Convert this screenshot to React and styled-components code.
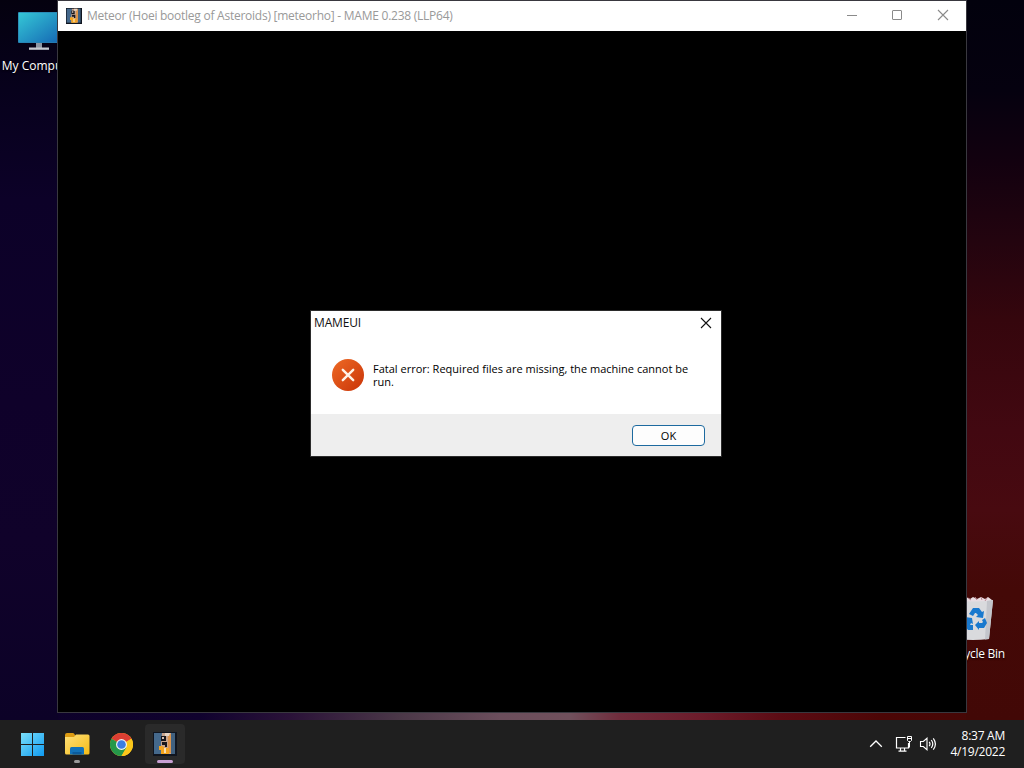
import styled, { createGlobalStyle } from 'styled-components';

const GlobalStyle = createGlobalStyle`
  * {
    box-sizing: border-box;
  }
  body {
    margin: 0;
    overflow: hidden;
    font-family: 'Open Sans', 'Noto Sans', sans-serif;
  }
`;

const ScreenStyled = styled.div`
  position: relative;
  display: flex;
  flex-direction: column;
  width: 1024px;
  height: 768px;
  overflow: hidden;
  background: #0b0220;
`;

const DesktopStyled = styled.div`
  position: relative;
  display: flex;
  justify-content: space-between;
  flex: 1;
  background: linear-gradient(
    90deg,
    #0c0128 0,
    #10022e 200px,
    #2a1238 290px,
    #4b3848 400px,
    #6b4e5c 500px,
    #70505c 570px,
    #702c3c 620px,
    #6c1c2b 700px,
    #5c0c14 780px,
    #4c0606 880px,
    #420806 1024px
  );
`;

const LeftWallpaperStyled = styled.div`
  width: 58px;
  background: linear-gradient(
    180deg,
    #04010f 0,
    #07011c 90px,
    #0c0128 200px,
    #0f012a 400px,
    #10022a 540px,
    #0c0227 720px
  );
`;

const RightWallpaperStyled = styled.div`
  width: 58px;
  background: linear-gradient(
    180deg,
    #02010d 0,
    #05010f 90px,
    #12010f 160px,
    #23040f 240px,
    #35060d 320px,
    #420811 430px,
    #480a10 510px,
    #440907 590px,
    #420806 720px
  );
`;

const ShortcutStyled = styled.div`
  position: absolute;
  left: ${({ $left }) => $left}px;
  top: ${({ $top }) => $top}px;
  width: 76px;
  display: flex;
  flex-direction: column;
  align-items: center;
  gap: ${({ $gap }) => $gap}px;
`;

const ShortcutLabelStyled = styled.span`
  padding-left: 2px;
  font-size: 12px;
  line-height: 16px;
  letter-spacing: ${({ $spacing }) => $spacing || 0}px;
  white-space: nowrap;
  color: #fff;
  text-shadow: 0 1px 2px #000;
`;

const WindowStyled = styled.div`
  position: absolute;
  left: 57px;
  top: 0;
  width: 910px;
  height: 713px;
  display: flex;
  flex-direction: column;
  border: 1px solid #39383f;
  background: #000;
`;

const TitleBarStyled = styled.div`
  display: flex;
  align-items: center;
  height: 30px;
  padding-left: 8px;
  background: #fff;
`;

const TitleStyled = styled.span`
  margin-left: 5px;
  font-size: 12px;
  line-height: 16px;
  letter-spacing: -0.25px;
  color: #999;
`;

const CaptionButtonsStyled = styled.div`
  display: flex;
  margin-left: auto;
`;

const CaptionButtonStyled = styled.div`
  display: flex;
  align-items: center;
  justify-content: center;
  width: ${({ $width }) => $width || 46}px;
  height: 30px;
  padding-bottom: 2px;
  color: #8a8a8a;
`;

const DialogStyled = styled.div`
  position: absolute;
  left: 310px;
  top: 310px;
  width: 412px;
  height: 147px;
  display: flex;
  flex-direction: column;
  border: 1px solid #2b2b2b;
  background: #fff;
`;

const DialogHeaderStyled = styled.div`
  display: flex;
  align-items: center;
  justify-content: space-between;
  height: 24px;
  padding: 0 9px 0 3px;
  font-size: 12px;
  letter-spacing: -0.15px;
  color: #111;
`;

const DialogTitleStyled = styled.span`
  padding-bottom: 2px;
`;

const DialogBodyStyled = styled.div`
  display: flex;
  flex: 1;
  padding: 24px 0 0 21px;
`;

const MessageStyled = styled.div`
  margin: 3px 0 0 9px;
  font-size: 11px;
  line-height: 13px;
  white-space: nowrap;
  letter-spacing: 0.01px;
  color: #000;
`;

const DialogFooterStyled = styled.div`
  display: flex;
  align-items: flex-start;
  justify-content: flex-end;
  height: 42px;
  padding: 11px 16px 0 0;
  background: #eee;
`;

const OkButtonStyled = styled.button`
  width: 73px;
  height: 21px;
  padding: 0;
  border: 1px solid #1d6a9f;
  border-radius: 4px;
  background: #fdfdfd;
  font-family: inherit;
  font-size: 11px;
  line-height: 19px;
  color: #000;
`;

const TaskbarStyled = styled.div`
  display: flex;
  align-items: center;
  height: 48px;
  padding: 0 19px 0 12px;
  background: #1f1f1f;
`;

const TaskButtonStyled = styled.div`
  position: relative;
  display: flex;
  align-items: center;
  justify-content: center;
  width: 40px;
  height: 40px;
  margin-right: ${({ $gap }) => $gap || 4}px;
  border-radius: 4px;
  background: ${({ $active }) => ($active ? '#2a2a2a' : 'transparent')};
`;

const IndicatorStyled = styled.div`
  position: absolute;
  left: 50%;
  bottom: 1px;
  width: ${({ $active }) => ($active ? 16 : 6)}px;
  height: 3px;
  border-radius: 2px;
  transform: translateX(-50%);
  background: ${({ $active }) => ($active ? '#c9a0d4' : '#9a9a9a')};
`;

const TrayStyled = styled.div`
  display: flex;
  align-items: center;
  margin-left: auto;
  color: #fff;
`;

const TrayItemStyled = styled.div`
  display: flex;
  margin-right: ${({ $gap }) => $gap}px;
`;

const ClockStyled = styled.div`
  width: 67px;
  font-size: 12px;
  line-height: 16px;
  letter-spacing: -0.25px;
  text-align: right;
  white-space: nowrap;
`;

const MonitorIcon = () => (
  <svg width='42' height='39' viewBox='0 0 42 39'>
    <defs>
      <linearGradient id='screen' x1='0' y1='0' x2='1' y2='1'>
        <stop offset='0' stopColor='#35c8d6' />
        <stop offset='1' stopColor='#1568b4' />
      </linearGradient>
    </defs>
    <path d='M18 31h6v5h-6z' fill='#8d96a3' />
    <path d='M11 35.500h20v2.300H11z' fill='#c5c9d0' />
    <rect x='0' y='0' width='42' height='31' rx='1' fill='#2a7fae' />
    <rect x='0.700' y='0.700' width='40.600' height='29.600' fill='url(#screen)' />
  </svg>
);

const RecycleBinIcon = () => (
  <svg width='44' height='46' viewBox='0 0 44 46'>
    <path
      d='M2 4l4-3 4 2 4-2 4 2 3-2 4 2 4-2 4 2 3-2 4 3-1 4H3z'
      fill='#e9dde2'
    />
    <path d='M16 2l3 2M23 1l2 3M29 1l1 3M35 2l-2 3' stroke='#b98793' strokeWidth='1' />
    <path d='M1 4q20 3 40 0l-4 39q-16 2-32 0z' fill='#d9dadd' />
    <path d='M35 5l6-1-4 39-4 .5z' fill='#c3c5cb' />
    <g fill='#1979ce'>
      <path d='M17 18l4-6h6l3 4 2-1-1 7-7-1 2-2-2-2h-1l-2 3z' />
      <path d='M30 24l3-2 2 5-3 5h-5v2l-4-5 4-4v2h3l1-1z' />
      <path d='M13 21l7 1 1 6-2-1-1 2h3v5h-5l-4-5 2-5z' />
    </g>
  </svg>
);

const MameIcon = ({ size }) => (
  <svg width={size} height={size} viewBox='0 0 24 24'>
    <rect width='24' height='24' fill='#10151f' />
    <path d='M1 1h8v21H1z' fill='#45698c' />
    <path d='M18 1h4v21h-4z' fill='#41617f' />
    <path d='M9 1h9v21H8V12z' fill='#c8a58d' />
    <path d='M15 2h3v19h-3z' fill='#dc944c' />
    <path d='M8 4h5v5H8z' fill='#17161b' />
    <path d='M9 5h2v2H9z' fill='#d8c2b4' />
    <path d='M12 1h5l-1 3h-4z' fill='#e6d4c4' />
    <path d='M6 14h3l3 2h4v6H8v-4H6z' fill='#f5a51e' />
    <path d='M9 10h5v5h-2v-2H9z' fill='#17161b' />
    <path d='M11 16h2v5h-2z' fill='#f8ddb0' />
  </svg>
);

const ErrorIcon = () => (
  <svg width='32' height='32' viewBox='0 0 32 32'>
    <defs>
      <linearGradient id='error' x1='0' y1='0' x2='1' y2='1'>
        <stop offset='0' stopColor='#ee6a25' />
        <stop offset='1' stopColor='#c93408' />
      </linearGradient>
    </defs>
    <circle cx='16' cy='16' r='16' fill='url(#error)' />
    <path
      d='M10.800 10.800l10.400 10.400M21.200 10.800L10.800 21.200'
      stroke='#fff3e8'
      strokeWidth='2.400'
      strokeLinecap='round'
    />
  </svg>
);

const CloseIcon = ({ size }) => (
  <svg width={size} height={size} viewBox='0 0 12 12' fill='none' stroke='currentColor'>
    <path d='M1 1l10 10M11 1L1 11' strokeWidth='1.100' />
  </svg>
);

const MinimizeIcon = () => (
  <svg width='12' height='12' viewBox='0 0 12 12' stroke='currentColor'>
    <path d='M1 6.500h10' />
  </svg>
);

const MaximizeIcon = () => (
  <svg width='12' height='12' viewBox='0 0 12 12' fill='none' stroke='currentColor'>
    <rect x='1.500' y='1.500' width='9' height='9' rx='0.500' />
  </svg>
);

const StartIcon = () => (
  <svg width='24' height='24' viewBox='0 0 24 24'>
    <defs>
      <linearGradient id='start' gradientUnits='userSpaceOnUse' x1='0' y1='0' x2='24' y2='24'>
        <stop offset='0' stopColor='#7fe3fb' />
        <stop offset='1' stopColor='#0f9af0' />
      </linearGradient>
    </defs>
    <path
      d='M1 1h11v11H1zM13 1h11v11h-11zM1 13h11v11H1zM13 13h11v11h-11z'
      fill='url(#start)'
    />
  </svg>
);

const ExplorerIcon = () => (
  <svg width='26' height='24' viewBox='0 0 26 24'>
    <defs>
      <linearGradient id='folder' x1='0' y1='0' x2='1' y2='1'>
        <stop offset='0' stopColor='#ffe07a' />
        <stop offset='1' stopColor='#f4bb16' />
      </linearGradient>
    </defs>
    <path d='M1 3q0-2 2-2h6q1 0 2 2l2 3-12 2z' fill='#dd9b12' />
    <path
      d='M1 5h9l2-2.500h12q1.500 0 1.500 1.500v17q0 1.500-1.500 1.500H2.500Q1 22.500 1 21z'
      fill='url(#folder)'
    />
    <path d='M6 22.500v-6q0-1.500 1.500-1.500h11q1.500 0 1.500 1.500v6z' fill='#1272b9' />
    <path d='M8.500 20h9v2.500h-9z' fill='#0b5b9c' />
  </svg>
);

const ChromeIcon = () => (
  <svg width='23' height='23' viewBox='0 0 24 24'>
    <circle cx='12' cy='12' r='12' fill='#fbc71b' />
    <path d='M12 12L1.600 6A12 12 0 0 1 22.400 6z' fill='#dc3e33' />
    <path d='M1.600 6A12 12 0 0 0 12 24l5.200-9L12 12z' fill='#25984a' />
    <path d='M12 24l5.200-9A6 6 0 0 0 17.200 9L22.400 6A12 12 0 0 1 12 24z' fill='#fbc71b' />
    <circle cx='12' cy='12' r='5.700' fill='#f4f4f4' />
    <circle cx='12' cy='12' r='4.500' fill='#3b7de2' />
  </svg>
);

const ChevronIcon = () => (
  <svg width='14' height='10' viewBox='0 0 14 10' fill='none' stroke='currentColor'>
    <path d='M1.200 7.800L7 2l5.800 5.800' strokeWidth='1.300' />
  </svg>
);

const NetworkIcon = () => (
  <svg width='18' height='18' viewBox='0 0 18 18' fill='none' stroke='currentColor'>
    <path d='M10.500 2.500h-9v10.500h12V8' strokeWidth='1.200' />
    <path d='M5.500 13v3M9.500 13v3M3.500 16.200h8' strokeWidth='1.200' />
    <path d='M12.500 1.500h4V5.500L15.500 6.500h-2L12.500 5.500zM12.500 3.500h4M14.500 6.500v5.500l-1 1' />
  </svg>
);

const VolumeIcon = () => (
  <svg width='18' height='16' viewBox='0 0 18 16' fill='none' stroke='currentColor'>
    <path d='M1.500 5.500h2.800L8 2.300v11.400L4.300 10.500H1.500z' strokeWidth='1.100' />
    <path
      d='M10.200 5.800q1.600 2.200 0 4.400M12.300 4q3 4 0 8M14.300 2.300q4.200 5.700 0 11.400'
      strokeWidth='1.200'
    />
  </svg>
);

const Shortcut = ({ left, top, gap, label, spacing, children }) => {
  return (
    <ShortcutStyled $left={left} $top={top} $gap={gap}>
      {children}
      <ShortcutLabelStyled $spacing={spacing}>{label}</ShortcutLabelStyled>
    </ShortcutStyled>
  );
};

const ErrorDialog = () => {
  return (
    <DialogStyled>
      <DialogHeaderStyled>
        <DialogTitleStyled>MAMEUI</DialogTitleStyled>
        <CloseIcon size={12} />
      </DialogHeaderStyled>
      <DialogBodyStyled>
        <ErrorIcon />
        <MessageStyled>
          Fatal error: Required files are missing, the machine cannot be
          <br />
          run.
        </MessageStyled>
      </DialogBodyStyled>
      <DialogFooterStyled>
        <OkButtonStyled>OK</OkButtonStyled>
      </DialogFooterStyled>
    </DialogStyled>
  );
};

const GameWindow = () => {
  return (
    <WindowStyled>
      <TitleBarStyled>
        <MameIcon size={16} />
        <TitleStyled>Meteor (Hoei bootleg of Asteroids) [meteorho] - MAME 0.238 (LLP64)</TitleStyled>
        <CaptionButtonsStyled>
          <CaptionButtonStyled $width={44}>
            <MinimizeIcon />
          </CaptionButtonStyled>
          <CaptionButtonStyled>
            <MaximizeIcon />
          </CaptionButtonStyled>
          <CaptionButtonStyled>
            <CloseIcon size={12} />
          </CaptionButtonStyled>
        </CaptionButtonsStyled>
      </TitleBarStyled>
    </WindowStyled>
  );
};

const Taskbar = () => {
  return (
    <TaskbarStyled>
      <TaskButtonStyled $gap={5}>
        <StartIcon />
      </TaskButtonStyled>
      <TaskButtonStyled>
        <ExplorerIcon />
        <IndicatorStyled />
      </TaskButtonStyled>
      <TaskButtonStyled>
        <ChromeIcon />
      </TaskButtonStyled>
      <TaskButtonStyled $active>
        <MameIcon size={24} />
        <IndicatorStyled $active />
      </TaskButtonStyled>
      <TrayStyled>
        <TrayItemStyled $gap={12}>
          <ChevronIcon />
        </TrayItemStyled>
        <TrayItemStyled $gap={6}>
          <NetworkIcon />
        </TrayItemStyled>
        <TrayItemStyled $gap={1}>
          <VolumeIcon />
        </TrayItemStyled>
        <ClockStyled>
          8:37 AM
          <br />
          4/19/2022
        </ClockStyled>
      </TrayStyled>
    </TaskbarStyled>
  );
};

const App = () => {
  return (
    <>
      <GlobalStyle />
      <ScreenStyled>
        <DesktopStyled>
          <LeftWallpaperStyled />
          <RightWallpaperStyled />
          <Shortcut left={1} top={12} gap={7} label='My Computer'>
            <MonitorIcon />
          </Shortcut>
          <Shortcut left={936} top={596} gap={4} label='Recycle Bin' spacing={-0.25}>
            <RecycleBinIcon />
          </Shortcut>
          <GameWindow />
          <ErrorDialog />
        </DesktopStyled>
        <Taskbar />
      </ScreenStyled>
    </>
  );
};

export default App;
